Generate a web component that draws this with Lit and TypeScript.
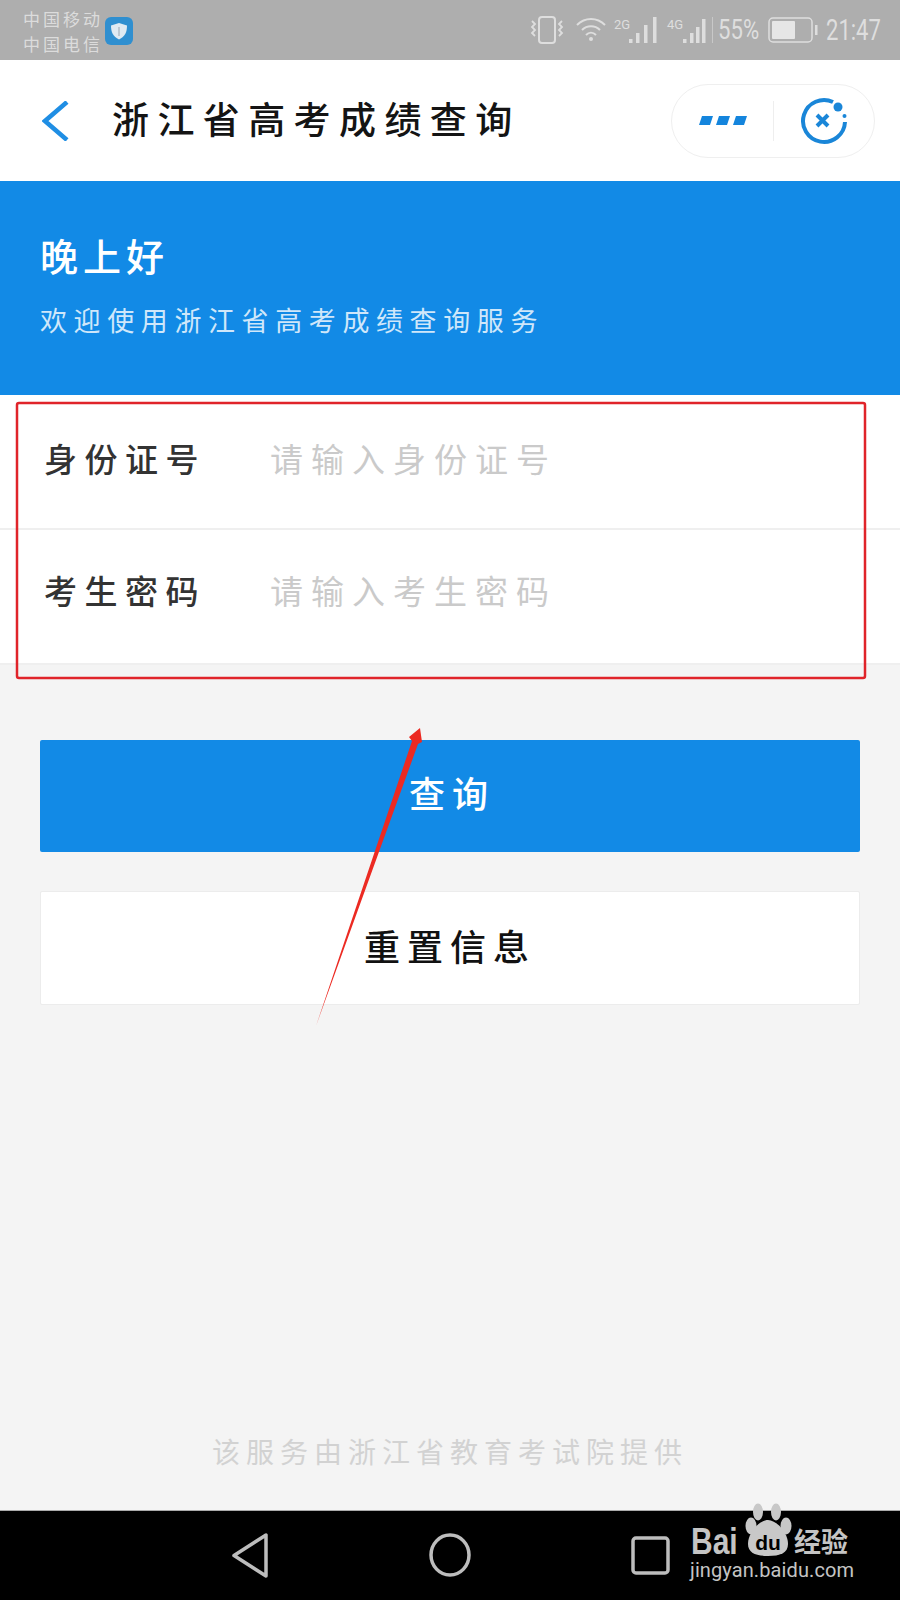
import { LitElement, html, css, svg } from "lit";
import { customElement } from "lit/decorators.js";

@customElement("app-root")
export class AppRoot extends LitElement {
  static styles = css`
    :host { display: block; width: 900px; height: 1600px; position: relative; overflow: hidden; background: #f4f4f4;
      font-family: "Noto Sans CJK SC", "Noto Sans", sans-serif; }
    .page { display: flex; flex-direction: column; height: 1600px; }
    .status { height: 60px; background: #aeaeae; display: flex; align-items: center; padding: 0 20px 0 23px; flex: none; }
    .carrier { font-size: 17px; line-height: 25px; letter-spacing: 3px; color: #dcdcdc; margin-top: 1px; white-space: nowrap; }
    .shield { margin-left: 2px; margin-top: 1px; display: block; }
    .spacer { flex: 1; }
    .si { display: block; overflow: visible; }
    .small { display: block; font-family: "Roboto", sans-serif; color: #dedede; line-height: 1; white-space: nowrap; transform-origin: left center; }
    .pct { font-size: 27px; width: 39px; margin-left: 5px; transform: scaleX(.82); }
    .time { font-size: 29px; width: 54px; margin-left: 8px; transform: scaleX(.76); }
    .sicons { display: flex; align-items: center; }
    .wifi { margin-left: 11px; }
    .batt { margin-left: 11px; }
    .vline { width: 1px; height: 26px; background: #c8c8c8; margin-left: 5px; }
    .top { height: 121px; background: #fff; display: flex; align-items: center; padding: 0 25px 0 42px; flex: none; }
    .title { margin-left: 43px; margin-top: -4px; font-size: 37px; letter-spacing: 8.4px; color: #141414; font-weight: 500; line-height: 1; white-space: nowrap; }
    .pill { width: 204px; height: 74px; box-sizing: border-box; border: 1px solid #efefef; border-radius: 37px; display: flex; align-items: center; }
    .dots { width: 101px; display: flex; justify-content: center; padding-top: 1px; }
    .sep { width: 1px; height: 40px; background: #eeeeee; }
    .close { flex: 1; display: flex; justify-content: center; }
    .hero { height: 214px; background: #128ae6; color: #fff; padding: 0 40px; flex: none; box-sizing: border-box; }
    .greet { font-size: 38px; letter-spacing: 5px; line-height: 1; padding-top: 55px; font-weight: 500; }
    .sub { font-size: 27px; letter-spacing: 6.6px; line-height: 1; margin-top: 32px; color: #cfe7fa; white-space: nowrap; }
    .form { background: #fff; flex: none; }
    .row { display: flex; align-items: center; height: 135px; box-sizing: border-box; padding: 0 0 8px 44px; border-bottom: 2px solid #efefef; }
    .row + .row { padding-bottom: 14px; }
    .label { width: 226px; font-size: 33px; letter-spacing: 7.5px; color: #333; font-weight: 500; white-space: nowrap; }
    .ph { font-size: 33px; letter-spacing: 8px; color: #cacaca; white-space: nowrap; }
    .btns { padding: 75px 40px 0; display: flex; flex-direction: column; gap: 39px; flex: none; }
    .btn { display: flex; align-items: center; justify-content: center; font-size: 36px; letter-spacing: 7px; font-weight: 500; box-sizing: border-box; border-radius: 2px; }
    .pri { background: #128ae6; color: #fff; height: 112px; padding: 0 0 8px 4px; }
    .sec { background: #fff; color: #111; height: 114px; border: 1px solid #ececec; padding-bottom: 6px; }
    .foot { margin-top: auto; text-align: center; font-size: 28px; letter-spacing: 6px; color: #d2d2d2; line-height: 1; padding-bottom: 45px; white-space: nowrap; }
    .nav { height: 90px; background: #000; border-top: 1px solid #aaa; box-sizing: border-box; flex: none; position: relative; }
    .navsvg { position: absolute; left: 0; top: 0; display: block; }
    .wm { position: absolute; left: 690px; top: -18px; width: 170px; height: 100px; color: #c4c4c4; }
    .wm-bai { position: absolute; left: 1px; top: 30px; font-family: "Liberation Sans", sans-serif; font-size: 30px; font-weight: 700; line-height: 1; transform-origin: left top; transform: scaleY(1.22); }
    .wm-paw { position: absolute; left: 54px; top: 10px; display: block; overflow: visible; }
    .wm-cn { position: absolute; left: 104px; top: 34px; font-size: 27px; font-weight: 700; line-height: 1; white-space: nowrap; }
    .wm-url { position: absolute; left: 0; top: 67px; font-family: "Roboto", sans-serif; font-size: 20px; line-height: 1; letter-spacing: .1px; white-space: nowrap; }
    .ann { position: absolute; left: 0; top: 0; pointer-events: none; display: block; }
  `;

  render() {
    return html`
      <div class="page">
        <div class="status">
          <div class="carrier">中国移动<br />中国电信</div>
          <svg class="shield" width="28" height="28" viewBox="0 0 28 28">
            <rect width="28" height="28" rx="6" fill="#2f8fd0" />
            <path d="M14 6l8 2.5c0 7-2 11-8 14-6-3-8-7-8-14z" fill="#dfeaf2" />
            <path d="M14 10v9" stroke="#bcc8d2" stroke-width="2" />
          </svg>
          <div class="spacer"></div>
          <div class="sicons">
            <svg class="si" width="36" height="30" viewBox="0 0 36 30" fill="none" stroke="#dedede" stroke-width="2">
              <rect x="10" y="2" width="16" height="26" rx="3" />
              <path d="M3 6l3 3-3 3 3 3-3 3 3 3M33 6l-3 3 3 3-3 3 3 3-3 3" stroke-width="1.8" />
            </svg>
            <svg class="si wifi" width="30" height="28" viewBox="0 0 30 28" fill="none" stroke="#dedede" stroke-width="2">
              <path d="M1 9c8-8 20-8 28 0M6 14c5-5 13-5 18 0M10 19c3-3 7-3 10 0" />
              <circle cx="15" cy="23" r="2" fill="#dedede" stroke="none" />
            </svg>
            <span style="width:8px"></span>
            ${this.signal("2G", 46, [15, 22, 30, 39], [25, 19, 11, 3])}
            <span style="width:7px"></span>
            ${this.signal("4G", 40, [16, 23, 29, 35], [25, 19, 13, 5])}
            <div class="vline"></div>
            <span class="small pct">55%</span>
            <svg class="si batt" width="50" height="26" viewBox="0 0 50 26">
              <rect x="1" y="1" width="43" height="24" rx="4" fill="none" stroke="#dedede" stroke-width="1.5" />
              <rect x="4" y="4" width="23" height="18" rx="1" fill="#e6e6e6" />
              <rect x="47" y="8" width="2.5" height="10" fill="#dedede" />
            </svg>
            <span class="small time">21:47</span>
          </div>
        </div>

        <div class="top">
          <svg width="27" height="40" viewBox="0 0 27 40" fill="none" stroke="#1f8ee4" stroke-width="4.5">
            <path d="M25 1L3 20l22 19" />
          </svg>
          <div class="title">浙江省高考成绩查询</div>
          <div class="spacer"></div>
          <div class="pill">
            <div class="dots">
              <svg width="48" height="10" viewBox="0 0 48 10" fill="#1485dd">
                <path d="M3 0h11l-3 9H0zM20 0h11l-3 9H17zM37 0h11l-3 9H34z" />
              </svg>
            </div>
            <div class="sep"></div>
            <div class="close">
              <svg width="48" height="48" viewBox="0 0 48 48" fill="none" stroke="#1a86d8" stroke-width="4">
                <path d="M33 5A21 21 0 1 0 45 25" />
                <path d="M17 18l11 11M28 18L17 29" stroke-width="4" />
                <circle cx="38" cy="10" r="4.5" fill="#1a86d8" stroke="none" />
                <circle cx="44.5" cy="19" r="2" fill="#1a86d8" stroke="none" />
              </svg>
            </div>
          </div>
        </div>

        <div class="hero">
          <div class="greet">晚上好</div>
          <div class="sub">欢迎使用浙江省高考成绩查询服务</div>
        </div>

        <div class="form">
          <div class="row"><div class="label">身份证号</div><div class="ph">请输入身份证号</div></div>
          <div class="row"><div class="label">考生密码</div><div class="ph">请输入考生密码</div></div>
        </div>

        <div class="btns">
          <div class="btn pri">查询</div>
          <div class="btn sec">重置信息</div>
        </div>

        <div class="foot">该服务由浙江省教育考试院提供</div>

        <div class="nav">
          <svg class="navsvg" width="900" height="90" viewBox="0 0 900 90" fill="none" stroke="#bdbdbd" stroke-width="3.5" stroke-linejoin="round">
            <path d="M266 24v41L234 44.5z" />
            <ellipse cx="450" cy="44" rx="19" ry="20" />
            <rect x="633" y="27" width="35" height="35" rx="3" />
          </svg>
          <div class="wm">
            <span class="wm-bai">Bai</span>
            <svg class="wm-paw" width="50" height="54" viewBox="0 0 50 54" fill="#c8c8c8">
              <ellipse cx="14" cy="9" rx="5" ry="8.5" />
              <ellipse cx="32" cy="9" rx="5" ry="8.5" />
              <ellipse cx="7" cy="23" rx="5.5" ry="8.5" />
              <ellipse cx="42" cy="23" rx="5.5" ry="8.5" />
              <path d="M24 17c8 0 20 12 20 24 0 9-8 12-20 12S4 50 4 41c0-12 12-24 20-24z" />
              ${svg`<text x="24" y="47" text-anchor="middle" font-family="Liberation Sans, sans-serif" font-size="21" font-weight="700" fill="#000">du</text>`}
            </svg>
            <span class="wm-cn">经验</span>
            <span class="wm-url">jingyan.baidu.com</span>
          </div>
        </div>
      </div>

      <svg class="ann" width="900" height="1600" viewBox="0 0 900 1600" fill="none">
        <rect x="17" y="403" width="848" height="275" rx="2" stroke="#e0242a" stroke-width="2.5" />
        <path d="M316 1026L412 741 409 737 420 728 422 742 418 744z" fill="#ec2a22" />
      </svg>
    `;
  }

  signal(t: string, w: number, xs: number[], tops: number[]) {
    return html`<svg class="si" width="${w}" height="32" viewBox="0 0 ${w} 32">
      ${svg`<text x="0" y="15" font-family="Roboto, sans-serif" font-size="13" fill="#dedede">${t}</text>`}
      ${xs.map((x, i) => svg`<rect x="${x}" y="${tops[i]}" width="3.5" height="${29 - tops[i]}" fill="#dedede"/>`)}
    </svg>`;
  }
}
